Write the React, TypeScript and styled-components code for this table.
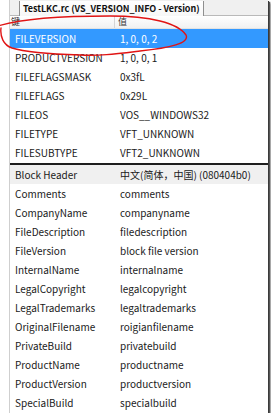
import React from 'react';
import styled, { createGlobalStyle } from 'styled-components';

const GlobalStyle = createGlobalStyle`
	html, body {
		margin: 0;
		padding: 0;
		background: #ffffff;
	}
	body {
		font-family: 'Noto Sans CJK SC', 'Noto Sans', sans-serif;
	}
`;

const Frame = styled.div`
	position: relative;
	width: 268px;
	height: 413px;
	display: flex;
	background: #ffffff;
	box-shadow: 1px 1px 0 #3a3a3a, 2px 2px 1px #555555, 3px 3px 2px #9a9a9a;
`;

const LeftGutter = styled.div`
	width: 9px;
	flex: none;
`;

const Panel = styled.div`
	flex: 1;
	display: flex;
	flex-direction: column;
	border-left: 1px solid #cfcfcf;
	min-width: 0;
`;

const TabStrip = styled.div`
	height: 15px;
	flex: none;
	display: flex;
	align-items: flex-end;
	padding-left: 9px;
	background: #f0f0f0;
	border-bottom: 1px solid #b9b9b9;
`;

const Tab = styled.div`
	height: 15px;
	box-sizing: border-box;
	padding: 0 3px;
	display: flex;
	align-items: center;
	background: linear-gradient(#ffffff, #f7f7f7);
	border: 1px solid #8f8f8f;
	border-top: none;
	border-bottom: none;
	margin-bottom: -1px;
	font-size: 9px;
	font-weight: bold;
	letter-spacing: -0.05px;
	color: #111111;
	white-space: nowrap;
`;

const HeaderRow = styled.div`
	height: 12px;
	flex: none;
	display: grid;
	grid-template-columns: 104px 1fr;
	background: linear-gradient(#ffffff, #f1f1f1);
	border-bottom: 1px solid #e2e2e2;
	font-size: 9px;
	line-height: 12px;
	color: #333333;
`;

const HeaderCell = styled.div<{ divider?: boolean }>`
	padding-left: ${(props) => (props.divider ? '3px' : '1px')};
	border-left: ${(props) => (props.divider ? '1px solid #d5d5d5' : 'none')};
`;

const Row = styled.div<{ selected?: boolean; shaded?: boolean }>`
	height: 19px;
	flex: none;
	display: grid;
	grid-template-columns: 105px 1fr;
	align-items: center;
	padding-left: 5px;
	font-size: 10px;
	color: ${(props) => (props.selected ? '#ffffff' : '#1a1a1a')};
	background: ${(props) => (props.selected ? '#3399ff' : props.shaded ? '#f0f0f0' : 'transparent')};
	white-space: nowrap;
`;

const Separator = styled.div`
	height: 3px;
	flex: none;
	border-top: 1px solid #ffffff;
	box-sizing: border-box;
	background: #1e1e1e;
`;

const Scribble = styled.svg`
	position: absolute;
	left: 0;
	top: 0;
	width: 200px;
	height: 70px;
	pointer-events: none;
	overflow: visible;
`;

const fixedInfo: [string, string][] = [
	['FILEVERSION', '1, 0, 0, 2'],
	['PRODUCTVERSION', '1, 0, 0, 1'],
	['FILEFLAGSMASK', '0x3fL'],
	['FILEFLAGS', '0x29L'],
	['FILEOS', 'VOS__WINDOWS32'],
	['FILETYPE', 'VFT_UNKNOWN'],
	['FILESUBTYPE', 'VFT2_UNKNOWN'],
];

const blockInfo: [string, string][] = [
	['Comments', 'comments'],
	['CompanyName', 'companyname'],
	['FileDescription', 'filedescription'],
	['FileVersion', 'block file version'],
	['InternalName', 'internalname'],
	['LegalCopyright', 'legalcopyright'],
	['LegalTrademarks', 'legaltrademarks'],
	['OriginalFilename', 'roigianfilename'],
	['PrivateBuild', 'privatebuild'],
	['ProductName', 'productname'],
	['ProductVersion', 'productversion'],
	['SpecialBuild', 'specialbuild'],
];

export default function App() {
	return (
		<>
			<GlobalStyle />
			<Frame>
				<LeftGutter />
				<Panel>
					<TabStrip>
						<Tab>TestLKC.rc (VS_VERSION_INFO - Version)</Tab>
					</TabStrip>
					<HeaderRow>
						<HeaderCell>键</HeaderCell>
						<HeaderCell divider>值</HeaderCell>
					</HeaderRow>
					{fixedInfo.map(([key, value], i) => (
						<Row key={key} selected={i === 0}>
							<span>{key}</span>
							<span>{value}</span>
						</Row>
					))}
					<Separator />
					<Row shaded>
						<span>Block Header</span>
						<span>中文(简体，中国) (080404b0)</span>
					</Row>
					{blockInfo.map(([key, value]) => (
						<Row key={key}>
							<span>{key}</span>
							<span>{value}</span>
						</Row>
					))}
				</Panel>
				{/* hand-drawn marker loop around the selected entry */}
				<Scribble viewBox="0 0 200 70">
					<path
						d="M -2 26 C 20 19, 60 16, 110 16 C 150 16, 178 23, 186 35 C 190 43, 170 48, 140 51 C 115 54, 100 56, 80 55 C 50 54, 25 52, 12 48 C 3 45, 0 36, 1 28"
						fill="none"
						stroke="#e01414"
						strokeWidth="1.4"
						strokeLinecap="round"
					/>
				</Scribble>
			</Frame>
		</>
	);
}
